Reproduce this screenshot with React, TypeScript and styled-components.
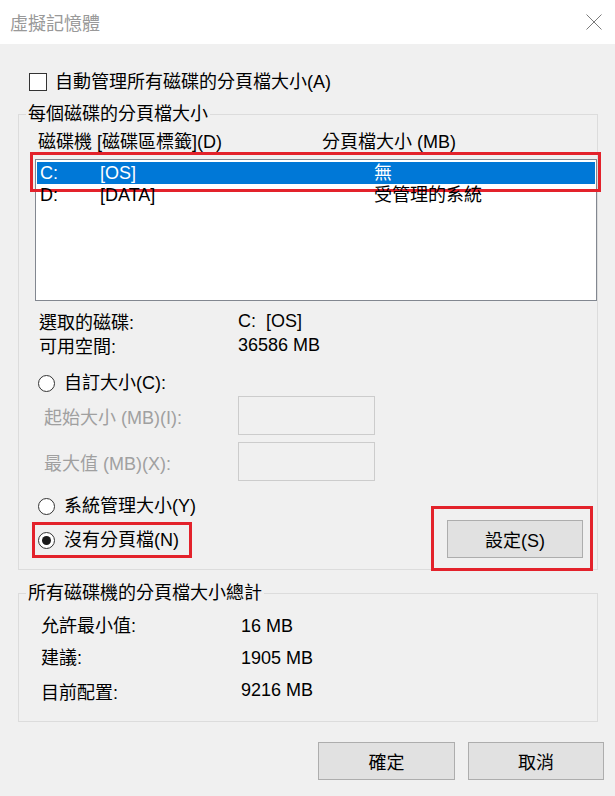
import React from "react";
import styled, { createGlobalStyle } from "styled-components";

const GlobalStyle = createGlobalStyle`
  html, body {
    margin: 0;
    padding: 0;
    background: #f0f0f0;
  }
  body {
    font-family: "Liberation Sans", "Noto Sans CJK TC", sans-serif;
    font-size: 18px;
    color: #000;
  }
`;

const RED = "#e3222b";

const drives = [
  { letter: "C:", label: "[OS]", size: "無", selected: true },
  { letter: "D:", label: "[DATA]", size: "受管理的系統", selected: false },
];

const totals = [
  { label: "允許最小值:", value: "16 MB", drop: 0 },
  { label: "建議:", value: "1905 MB", drop: 0 },
  { label: "目前配置:", value: "9216 MB", drop: 3 },
];

const Radio = ({ checked, children }: { checked?: boolean; children: React.ReactNode }) => (
  <RadioLabel>
    <RadioCircle $checked={checked} />
    <span>{children}</span>
  </RadioLabel>
);

const App = () => {
  return (
    <>
      <GlobalStyle />
      <Window>
        <TitleBar>
          <span>虛擬記憶體</span>
          <svg width="16" height="16" viewBox="0 0 16 16">
            <path d="M0.5 0.5 L15.5 15.5 M15.5 0.5 L0.5 15.5" stroke="#7a7a7a" strokeWidth="1" />
          </svg>
        </TitleBar>

        <Content>
          <CheckRow>
            <CheckBox />
            <span>自動管理所有磁碟的分頁檔大小(A)</span>
          </CheckRow>

          <Group $mt={10} $pad="6px 0 11px 16px">
            <Legend $ml={-9}>每個磁碟的分頁檔大小</Legend>
            <ColumnHeader>
              <span>磁碟機 [磁碟區標籤](D)</span>
              <span>分頁檔大小 (MB)</span>
            </ColumnHeader>
            <ListBox>
              {drives.map((d) => (
                <DriveRow key={d.letter} $selected={d.selected}>
                  <span>{d.letter}</span>
                  <span>{d.label}</span>
                  <span>{d.size}</span>
                </DriveRow>
              ))}
            </ListBox>

            <InfoGrid>
              <span>選取的磁碟:</span>
              <span>C:&nbsp;&nbsp;[OS]</span>
              <span>可用空間:</span>
              <span>36586 MB</span>
            </InfoGrid>

            <RadioRow $mt={15}>
              <Radio>自訂大小(C):</Radio>
            </RadioRow>
            <FieldRow $mt={2}>
              <span>起始大小 (MB)(I):</span>
              <TextBox />
            </FieldRow>
            <FieldRow $mt={7}>
              <span>最大值 (MB)(X):</span>
              <TextBox />
            </FieldRow>

            <BottomRow>
              <RadioColumn>
                <RadioRow $mt={0}>
                  <Radio>系統管理大小(Y)</Radio>
                </RadioRow>
                <MarkedRadio>
                  <Radio checked>沒有分頁檔(N)</Radio>
                </MarkedRadio>
              </RadioColumn>
              <MarkedButton>
                <Button $w={136}>設定(S)</Button>
              </MarkedButton>
            </BottomRow>
          </Group>

          <Group $mt={12} $pad="11px 0 20px 22px">
            <Legend $ml={-15}>所有磁碟機的分頁檔大小總計</Legend>
            <TotalsList>
              {totals.map((t) => (
                <TotalRow key={t.label}>
                  <TotalLabel $drop={t.drop}>{t.label}</TotalLabel>
                  <span>{t.value}</span>
                </TotalRow>
              ))}
            </TotalsList>
          </Group>

          <ButtonBar>
            <Button $w={137}>確定</Button>
            <Button $w={136}>取消</Button>
          </ButtonBar>
        </Content>
      </Window>
    </>
  );
};

const Window = styled.div`
  width: 615px;
  height: 796px;
  display: flex;
  flex-direction: column;
  overflow: hidden;
  background: #f0f0f0;
`;

const TitleBar = styled.div`
  height: 44px;
  flex: none;
  display: flex;
  align-items: center;
  justify-content: space-between;
  padding: 0 13px 0 10px;
  background: #fff;
  color: #999;
  font-size: 18px;
  box-sizing: border-box;
`;

const Content = styled.div`
  padding: 0 17px 0 18px;
  display: flex;
  flex-direction: column;
`;

const CheckRow = styled.label`
  display: flex;
  align-items: center;
  gap: 8px;
  height: 22px;
  line-height: 22px;
  margin-top: 27px;
  padding-left: 11px;
`;

const CheckBox = styled.span`
  width: 18px;
  height: 18px;
  box-sizing: border-box;
  border: 1px solid #333;
  background: #fff;
`;

const Group = styled.fieldset<{ $mt: number; $pad: string }>`
  margin: ${(p) => p.$mt}px 0 0;
  padding: ${(p) => p.$pad};
  border: 1px solid #dcdcdc;
  min-width: 0;
`;

const Legend = styled.legend<{ $ml: number }>`
  margin-left: ${(p) => p.$ml}px;
  padding: 0 2px;
  line-height: 22px;
`;

const ColumnHeader = styled.div`
  display: grid;
  grid-template-columns: 284px 1fr;
  padding-left: 3px;
  line-height: 22px;
`;

const ListBox = styled.div`
  margin-top: 6px;
  height: 142px;
  box-sizing: border-box;
  border: 1px solid #828790;
  background: #fff;
  padding: 2px 1px;
`;

const DriveRow = styled.div<{ $selected?: boolean }>`
  position: relative;
  display: grid;
  grid-template-columns: 60px 274px 1fr;
  height: 22px;
  line-height: 22px;
  padding-left: 3px;
  background: ${(p) => (p.$selected ? "#0078d7" : "transparent")};
  color: ${(p) => (p.$selected ? "#fff" : "#000")};

  ${(p) =>
    p.$selected &&
    `
    &::after {
      content: "";
      position: absolute;
      top: -10px;
      left: -7px;
      right: -6px;
      bottom: -8px;
      border: 3px solid ${RED};
      pointer-events: none;
    }
  `}
`;

const InfoGrid = styled.div`
  display: grid;
  grid-template-columns: 199px 1fr;
  grid-auto-rows: 24px;
  align-items: center;
  margin-top: 8px;
  padding-left: 4px;
`;

const RadioRow = styled.div<{ $mt: number }>`
  margin-top: ${(p) => p.$mt}px;
  padding-left: 3px;
`;

const RadioLabel = styled.label`
  display: flex;
  align-items: center;
  gap: 9px;
  height: 22px;
  line-height: 22px;
`;

const RadioCircle = styled.span<{ $checked?: boolean }>`
  width: 17px;
  height: 17px;
  box-sizing: border-box;
  border: 1px solid #333;
  border-radius: 50%;
  background: #fff;
  display: flex;
  align-items: center;
  justify-content: center;

  &::after {
    content: "";
    width: 9px;
    height: 9px;
    border-radius: 50%;
    background: ${(p) => (p.$checked ? "#1a1a1a" : "transparent")};
  }
`;

const FieldRow = styled.div<{ $mt: number }>`
  display: grid;
  grid-template-columns: 194px 137px;
  align-items: center;
  margin-top: ${(p) => p.$mt}px;
  padding-left: 9px;
  color: #a0a0a0;
`;

const TextBox = styled.div`
  height: 39px;
  box-sizing: border-box;
  border: 1px solid #cccccc;
  background: #f0f0f0;
`;

const BottomRow = styled.div`
  display: flex;
  align-items: flex-start;
  justify-content: space-between;
  margin-top: 14px;
`;

const RadioColumn = styled.div`
  display: flex;
  flex-direction: column;
`;

const MarkedRadio = styled.div`
  margin: 5px 0 0 -3px;
  border: 3px solid ${RED};
  padding: 4px 10px 4px 3px;
  align-self: flex-start;
`;

const MarkedButton = styled.div`
  margin: 11px 4px -13px 0;
  border: 3px solid ${RED};
  padding: 11px 7px 10px 13px;
`;

const Button = styled.button<{ $w: number }>`
  width: ${(p) => p.$w}px;
  height: 38px;
  box-sizing: border-box;
  border: 1px solid #adadad;
  background: #e1e1e1;
  font: inherit;
  color: #000;
  padding: 0;
  display: flex;
  align-items: center;
  justify-content: center;
`;

const TotalsList = styled.div`
  display: flex;
  flex-direction: column;
  gap: 10px;
`;

const TotalRow = styled.div`
  display: grid;
  grid-template-columns: 200px 1fr;
  line-height: 22px;
`;

const TotalLabel = styled.span<{ $drop: number }>`
  position: relative;
  top: ${(p) => p.$drop}px;
`;

const ButtonBar = styled.div`
  display: flex;
  justify-content: flex-end;
  gap: 13px;
  margin: 20px -6px 0 0;
`;

export default App;
